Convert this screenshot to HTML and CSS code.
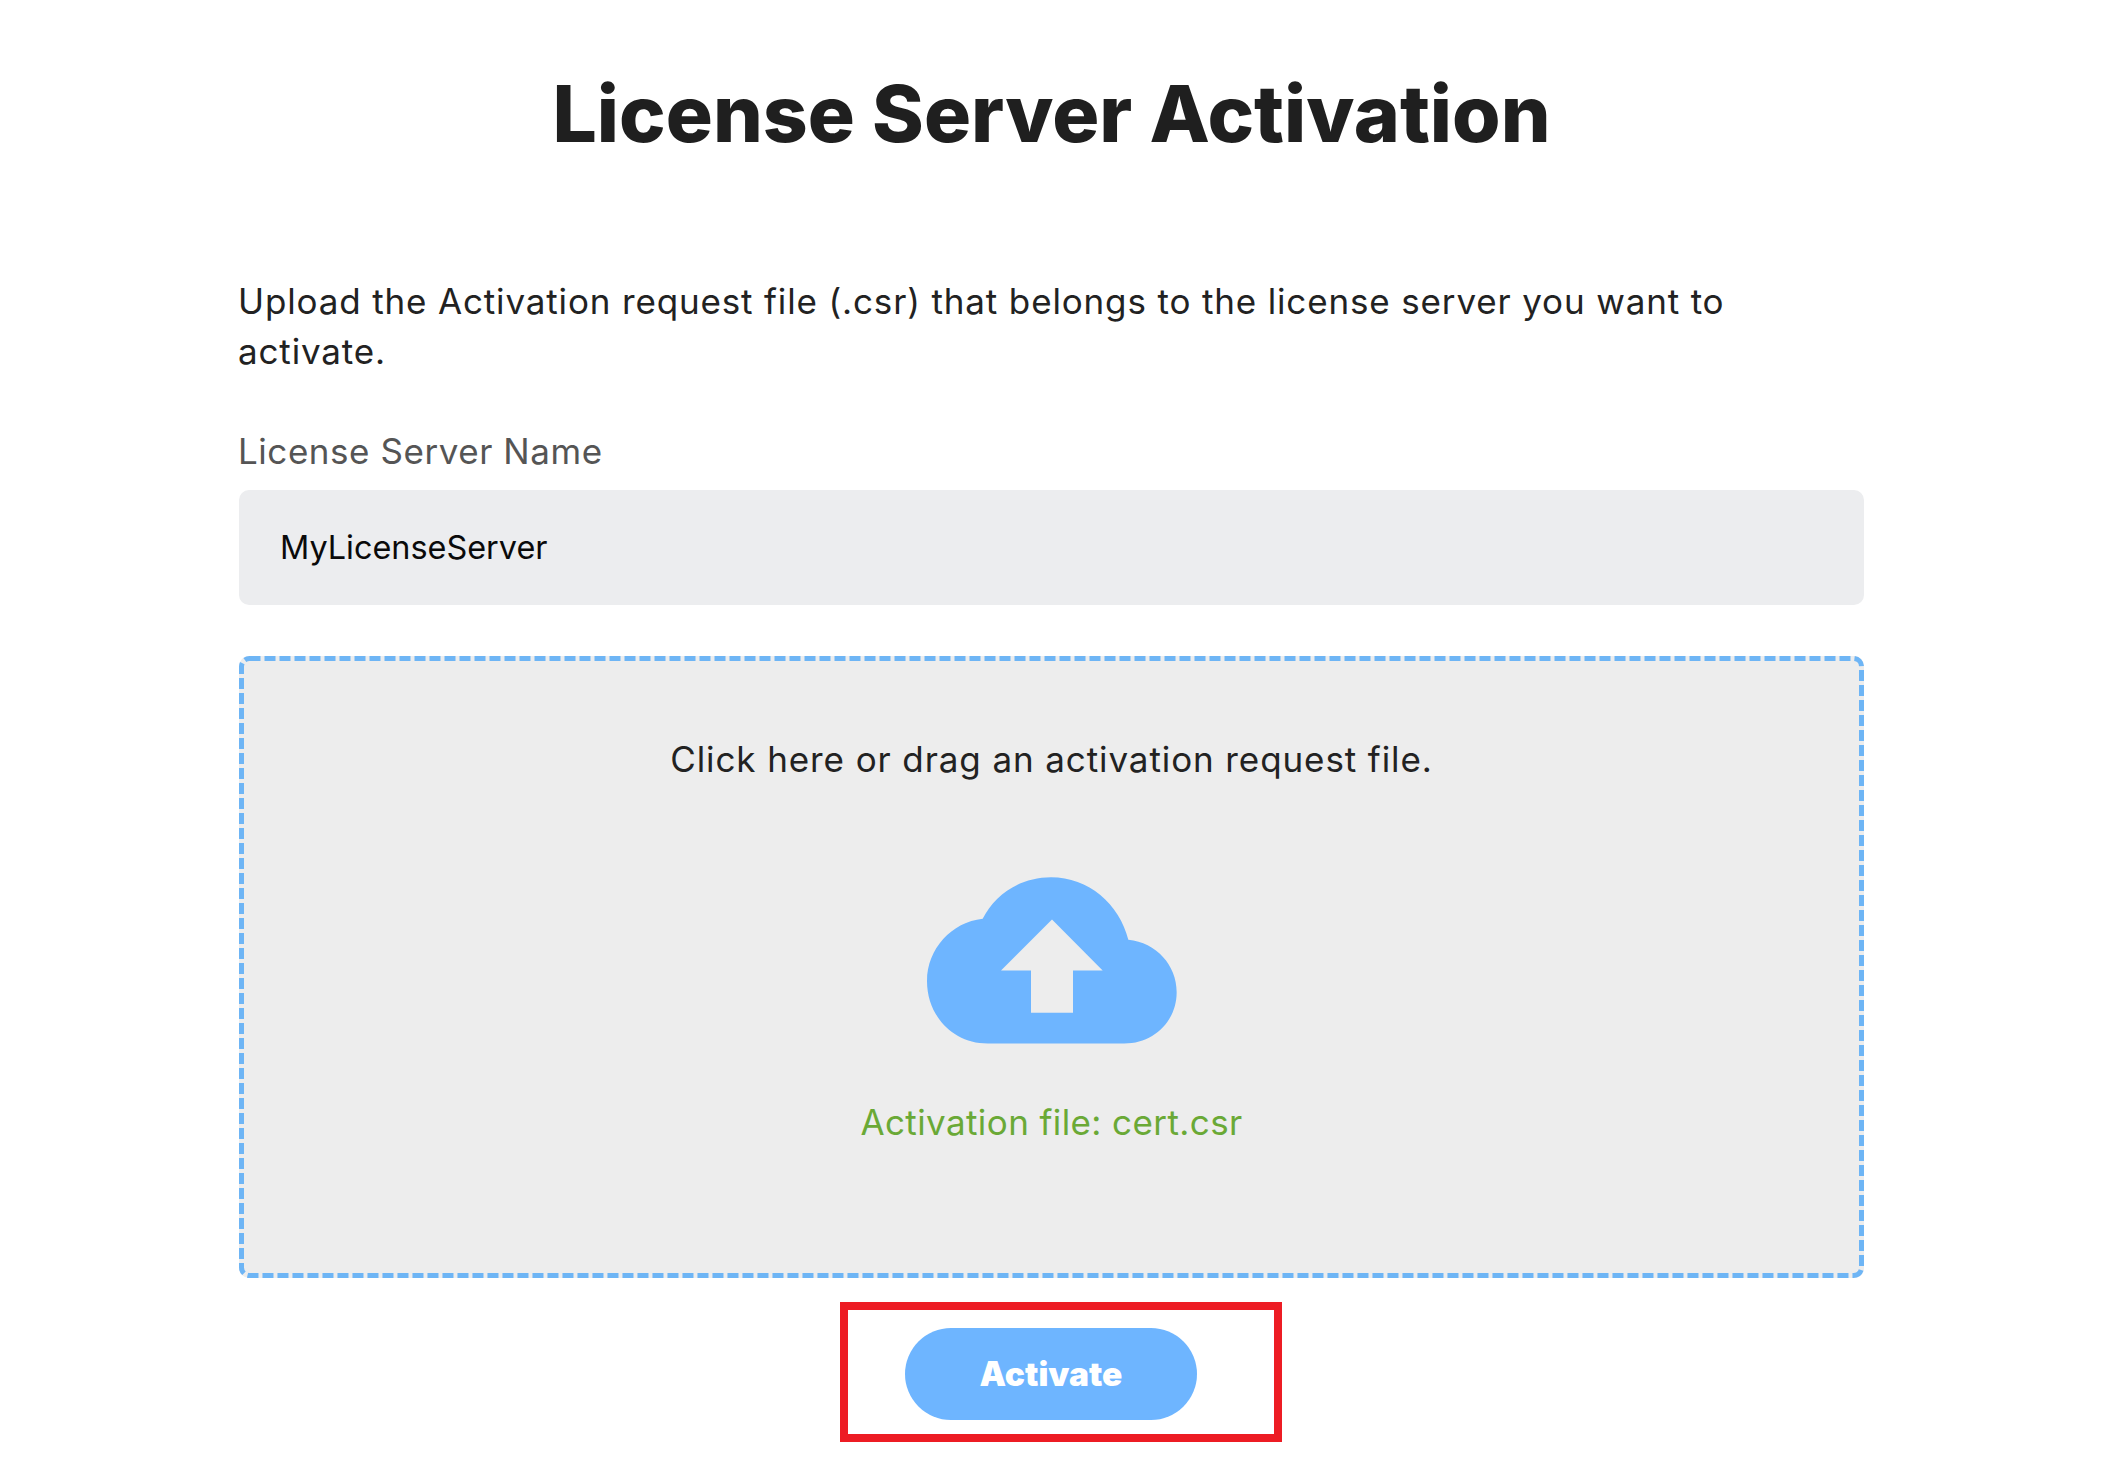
FILE: index.html
```html
<!DOCTYPE html>
<html lang="en">
<head>
<meta charset="utf-8">
<title>License Server Activation</title>
<link rel="stylesheet" href="styles.css">
</head>
<body>
<main class="page">
  <h1 class="title">License Server Activation</h1>
  <p class="intro">Upload the Activation request file (.csr) that belongs to the license server you want to activate.</p>
  <label class="field-label" for="name">License Server Name</label>
  <div class="input" id="name">MyLicenseServer</div>
  <section class="drop">
    <svg class="drop-border" aria-hidden="true"><rect class="drop-rect" x="2.5" y="2.5" rx="8" ry="8"></rect></svg>
    <p class="drop-text">Click here or drag an activation request file.</p>
    <svg class="cloud" viewBox="138 80 750 500" aria-hidden="true">
      <path fill-rule="evenodd" d="M320 579C215 579 138 495 138 392C138 295 212 215 305 205C342 130 420 80 510 80C622 80 716 160 742 268C826 276 887 345 887 425C887 512 818 579 730 579ZM513 207L360 360H450V487H576V360H665Z"></path>
    </svg>
    <p class="file">Activation file: cert.csr</p>
  </section>
  <div class="actions">
    <div class="highlight"><button class="btn" type="button">Activate</button></div>
  </div>
</main>
</body>
</html>
```

FILE: styles.css
```css
* { box-sizing: border-box; }
html, body { margin: 0; background: #fff; }
body { font-family: Inter, "Open Sans", sans-serif; height: 1469px; overflow: hidden; }
.page { width: 1864px; padding: 66px 0 0 239px; }
.title { margin: 0 0 114px; text-align: center; font-size: 78.5px; line-height: 96px; font-weight: 800; color: #1f1f1f; }
.intro { margin: 0 0 50px -1px; font-size: 35px; letter-spacing: .85px; line-height: 50px; color: #222; padding-right: 100px; }
.field-label { display: block; margin-left: -1px; font-size: 35px; letter-spacing: .55px; line-height: 50px; color: #555; margin-bottom: 14px; }
.input { height: 115px; background: #ecedef; border-radius: 10px; padding: 0 41px; display: flex; align-items: center; font-size: 32.4px; color: #0a0a0a; }
.drop { position: relative; margin-top: 51px; height: 622px; background: #ededed; border-radius: 10px; padding: 78px 0 0; display: flex; flex-direction: column; align-items: center; }
.drop-border { position: absolute; inset: 0; width: 100%; height: 100%; }
.drop-rect { width: calc(100% - 5px); height: calc(100% - 5px); fill: none; stroke: #6eb5f5; stroke-width: 5; stroke-dasharray: 11 4; }
.drop-text { margin: 0; font-size: 35px; letter-spacing: .9px; line-height: 50px; color: #222; }
.cloud { display: block; width: 250px; height: 167px; margin-top: 93px; fill: #6eb5ff; }
.file { margin: 53px 0 0; font-size: 35px; letter-spacing: .4px; line-height: 50px; color: #6aa936; }
.actions { display: flex; justify-content: center; margin-top: 24px; }
.highlight { width: 442px; height: 140px; margin-left: 19px; padding: 18px 0 0 57px; border: 8px solid #ed1c24; }
.btn { display: block; width: 292px; height: 92px; border: 0; border-radius: 46px; background: #6eb5ff; color: #fff; font: 900 33.5px Inter, sans-serif; }
```
